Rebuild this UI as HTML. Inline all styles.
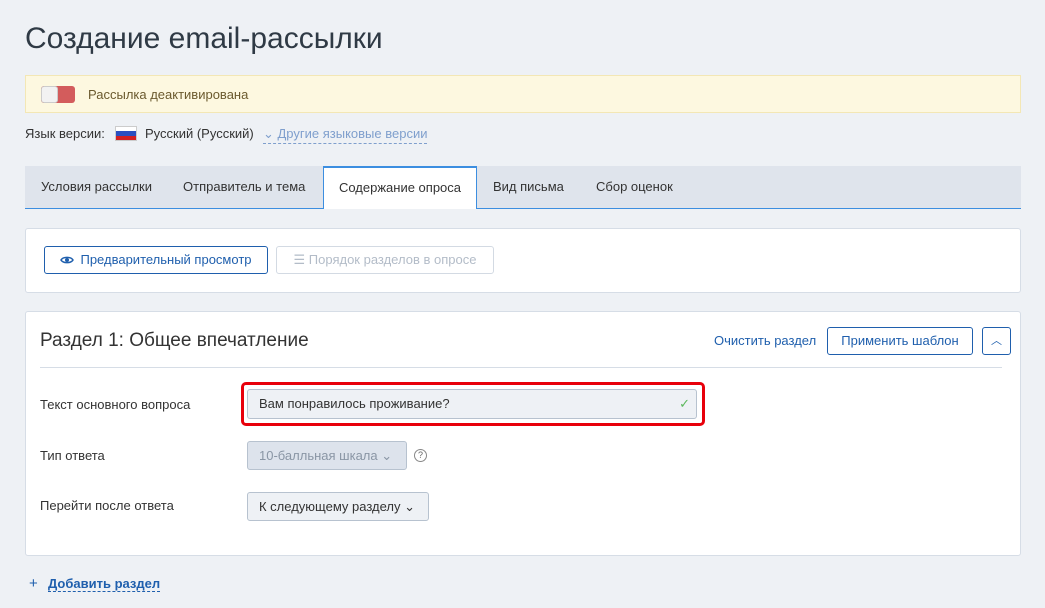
<!DOCTYPE html>
<html><head><meta charset="utf-8"><style>
*{box-sizing:border-box;margin:0;padding:0}
body{width:1045px;height:608px;background:#eef1f5;font-family:"Liberation Sans","DejaVu Sans",sans-serif;font-size:13px;color:#333;position:relative;overflow:hidden}
.a{position:absolute}
h1{position:absolute;left:25px;top:22px;font-size:30px;font-weight:normal;color:#2f3a45}
.banner{left:25px;top:75px;width:996px;height:38px;background:#fdf8e0;border:1px solid #f3e7b5}
.tog{left:15px;top:10px;width:34px;height:17px;border-radius:3px;background:#d35c5c;overflow:hidden}
.tog i{position:absolute;left:0;top:0;width:17px;height:17px;background:#f2f2f2;border:1px solid #ccc;border-radius:3px}
.tabs{left:25px;top:166px;width:996px;height:43px;background:#dfe4ec;border-bottom:1px solid #3c8ee0}
.tab{position:absolute;top:0;height:42px;line-height:42px;color:#333}
.tab.act{background:#fff;border:1px solid #3c8ee0;border-bottom:none;height:43px;border-top:2px solid #3c8ee0;line-height:40px;text-align:center}
.panel{background:#fff;border:1px solid #d6dde6;border-radius:3px}
.btn{position:absolute;height:28px;border:1px solid #1f5fad;border-radius:3px;line-height:26px;color:#1f5fad;background:#fff;text-align:center}
.lbl{position:absolute;left:14px;color:#333}
.inp{position:absolute;border:1px solid #b7c2cf;border-radius:3px;background:#eef1f5;line-height:27px;padding-left:11px}
</style></head><body>
<h1>Создание email-рассылки</h1>
<div class="a banner"><div class="a tog"><i></i></div><span class="a" style="left:62px;top:11px;color:#6b5a2e">Рассылка деактивирована</span></div>
<div class="a" style="left:25px;top:126px">Язык версии:</div>
<div class="a" style="left:115px;top:126px;width:22px;height:15px;border:1px solid #ccc">
<div style="height:4px;background:#fff"></div><div style="height:5px;background:#2b4fbf"></div><div style="height:4px;background:#d32020"></div></div>
<div class="a" style="left:145px;top:126px">Русский (Русский)</div>
<div class="a" style="left:263px;top:126px;color:#7f9fcd;border-bottom:1px dashed #7f9fcd;padding-bottom:1px">⌄ Другие языковые версии</div>
<div class="a tabs">
<div class="tab" style="left:16px">Условия рассылки</div>
<div class="tab" style="left:158px">Отправитель и тема</div>
<div class="tab act" style="left:298px;width:154px">Содержание опроса</div>
<div class="tab" style="left:468px">Вид письма</div>
<div class="tab" style="left:571px">Сбор оценок</div>
</div>
<div class="a panel" style="left:25px;top:228px;width:996px;height:65px">
<div class="btn" style="left:18px;top:17px;width:224px"><svg width="14" height="10" style="vertical-align:-1px;margin-right:6px" viewBox="0 0 14 10"><path d="M1 5C3 1.5 11 1.5 13 5C11 8.5 3 8.5 1 5Z" fill="none" stroke="#1f5fad" stroke-width="1.5"/><circle cx="7" cy="5" r="2" fill="#1f5fad"/></svg>Предварительный просмотр</div>
<div class="btn" style="left:250px;top:17px;width:218px;border-color:#d3dae3;color:#b3bcc8">☰ Порядок разделов в опросе</div>
</div>
<div class="a panel" style="left:25px;top:311px;width:996px;height:245px">
<div class="a" style="left:14px;top:18px;font-size:19px;color:#333">Раздел 1: Общее впечатление</div>
<div class="a" style="left:688px;top:21px;color:#1f5fad">Очистить раздел</div>
<div class="btn" style="left:801px;top:15px;width:146px">Применить шаблон</div>
<div class="btn" style="left:956px;top:15px;width:29px;font-size:11px">︿</div>
<div class="a" style="left:14px;top:55px;width:962px;height:1px;background:#d6dde6"></div>
<div class="lbl" style="top:85px">Текст основного вопроса</div>
<div class="a" style="left:215px;top:70px;width:464px;height:44px;border:3px solid #e8000b;border-radius:5px"></div>
<div class="inp" style="left:221px;top:77px;width:450px;height:30px">Вам понравилось проживание?<span style="position:absolute;right:6px;color:#5cb85c">✓</span></div>
<div class="lbl" style="top:136px">Тип ответа</div>
<div class="inp" style="left:221px;top:129px;width:160px;height:29px;background:#dde3ec;color:#8a96a5">10-балльная шкала ⌄</div>
<div class="a" style="left:388px;top:137px;width:13px;height:13px;border:1px solid #888;border-radius:50%;font-size:9px;line-height:11px;text-align:center;color:#666">?</div>
<div class="lbl" style="top:186px">Перейти после ответа</div>
<div class="inp" style="left:221px;top:180px;width:182px;height:29px">К следующему разделу ⌄</div>
</div>
<div class="a" style="left:29px;top:575px;color:#1f5fad;font-size:15px">+</div>
<div class="a" style="left:48px;top:576px;color:#1f5fad;font-weight:bold;border-bottom:1px dashed #1f5fad">Добавить раздел</div>
</body></html>
